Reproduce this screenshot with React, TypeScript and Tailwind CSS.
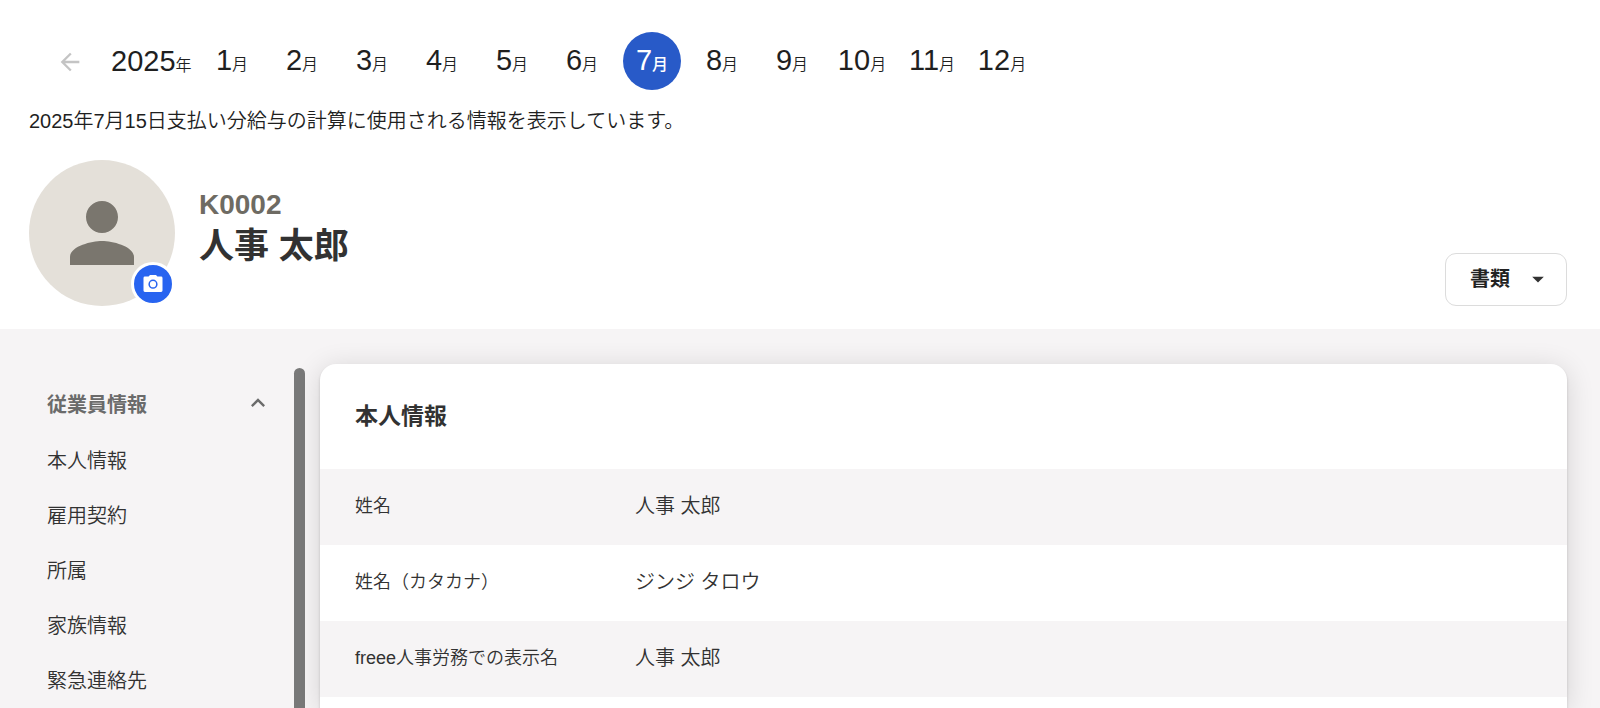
import React from "react";
import { MdArrowBack, MdArrowDropDown, MdExpandLess, MdPerson } from "react-icons/md";

const months = [1, 2, 3, 4, 5, 6, 7, 8, 9, 10, 11, 12];
const selectedMonth = 7;

const sections = ["本人情報", "雇用契約", "所属", "家族情報", "緊急連絡先"];

const profile = [
  { label: "姓名", value: "人事 太郎" },
  { label: "姓名（カタカナ）", value: "ジンジ タロウ" },
  { label: "freee人事労務での表示名", value: "人事 太郎" },
];

function MonthPicker() {
  return (
    <nav aria-label="対象月" className="flex items-center">
      <button type="button" aria-label="前の年" className="ml-[27px] pt-0.5 text-[#c4c4c4]">
        <MdArrowBack className="size-7" />
      </button>
      <p className="ml-[27px] w-[92px] text-[29px] leading-[42px] whitespace-nowrap">
        2025<span className="text-base">年</span>
      </p>
      <ul className="flex gap-3">
        {months.map((month) => (
          <li key={month}>
            <button
              type="button"
              aria-current={month === selectedMonth ? "date" : undefined}
              className={
                month === selectedMonth
                  ? "h-[58px] w-[58px] rounded-full bg-[#285ac8] text-[29px] whitespace-nowrap text-white"
                  : "h-[58px] w-[58px] rounded-full text-[29px] whitespace-nowrap"
              }
            >
              {month}
              <span className={month === selectedMonth ? "text-base font-medium" : "text-base"}>月</span>
            </button>
          </li>
        ))}
      </ul>
    </nav>
  );
}

function Header() {
  return (
    <header className="bg-white pt-8 pr-[33px] pb-[23px] pl-[29px]">
      <MonthPicker />
      <p className="mt-4 text-xl leading-[30px]">2025年7月15日支払い分給与の計算に使用される情報を表示しています。</p>
      <div className="mt-6 flex">
        <div className="relative flex size-[146px] shrink-0 items-center justify-center rounded-full bg-[#e4e0d9] text-[#7a766e]">
          <MdPerson className="size-24" />
          <button
            type="button"
            aria-label="写真を変更"
            className="absolute right-0 bottom-0 flex size-11 items-center justify-center rounded-full border-3 border-white bg-[#2864f0] text-white"
          >
            <svg viewBox="0 0 20 18" className="h-[18px] w-5" aria-hidden="true">
              <path
                fill="currentColor"
                fillRule="evenodd"
                d="M7 0h6l1.400 1.600h3.700a1.400 1.400 0 0 1 1.400 1.400v12.600a1.400 1.400 0 0 1-1.400 1.400H1.900a1.400 1.400 0 0 1-1.400-1.400V3a1.400 1.400 0 0 1 1.400-1.400h3.700zM10 4.600a4.600 4.600 0 1 0 0 9.200 4.600 4.600 0 0 0 0-9.200zm0 1.500a3.100 3.100 0 1 1 0 6.200 3.100 3.100 0 0 1 0-6.200z"
              />
            </svg>
          </button>
        </div>
        <div className="ml-6 pt-[29px] font-bold">
          <p className="text-[28px] leading-8 text-[#6e6b63]">K0002</p>
          <h1 className="text-[35px] leading-[50px] text-[#323232]">人事 太郎</h1>
        </div>
        <button
          type="button"
          className="ml-auto flex h-[53px] w-[122px] items-center self-end rounded-[11px] border border-[#dcdcdc] pb-0.5 pl-6 text-xl font-bold text-[#222]"
        >
          書類
          <MdArrowDropDown className="ml-3.5 size-7 text-[#323232]" />
        </button>
      </div>
    </header>
  );
}

function Sidebar() {
  return (
    <nav aria-label="従業員情報" className="w-[294px] shrink-0 pt-12 pr-[22px] pl-[47px] text-[#323232]">
      <button
        type="button"
        aria-expanded="true"
        className="flex h-14 w-full items-center justify-between text-xl font-bold text-[#6b6b6b]"
      >
        従業員情報
        <MdExpandLess className="mb-1 size-7" />
      </button>
      <ul>
        {sections.map((name) => (
          <li key={name}>
            <a href="#" className="flex h-[55px] items-center text-xl">
              {name}
            </a>
          </li>
        ))}
      </ul>
    </nav>
  );
}

export default function App() {
  return (
    <div className="flex min-h-screen flex-col overflow-hidden bg-[#f6f4f5] font-['Liberation_Sans','Noto_Sans_CJK_JP',sans-serif] font-[350] text-[#1f1f1f]">
      <Header />
      <div className="flex flex-1">
        <Sidebar />
        <div className="mt-[39px] w-[11px] shrink-0 rounded-t-full bg-[#797979]" />
        <main className="mt-[35px] mr-[33px] ml-[15px] flex-1 rounded-t-2xl bg-white shadow-[0_2px_3px_rgba(0,0,0,0.16),0_4px_28px_rgba(0,0,0,0.14)]">
          <h2 className="flex h-[105px] items-center pl-[35px] text-[23px] font-bold text-[#323232]">本人情報</h2>
          <table className="w-full text-left text-[#323232]">
            <tbody>
              {profile.map((row) => (
                <tr key={row.label} className="h-[76px] odd:bg-[#f6f4f5]">
                  <th scope="row" className="w-[315px] pb-0.5 pl-[35px] text-lg font-[350]">
                    {row.label}
                  </th>
                  <td className="pb-0.5 text-xl">{row.value}</td>
                </tr>
              ))}
            </tbody>
          </table>
        </main>
      </div>
    </div>
  );
}
